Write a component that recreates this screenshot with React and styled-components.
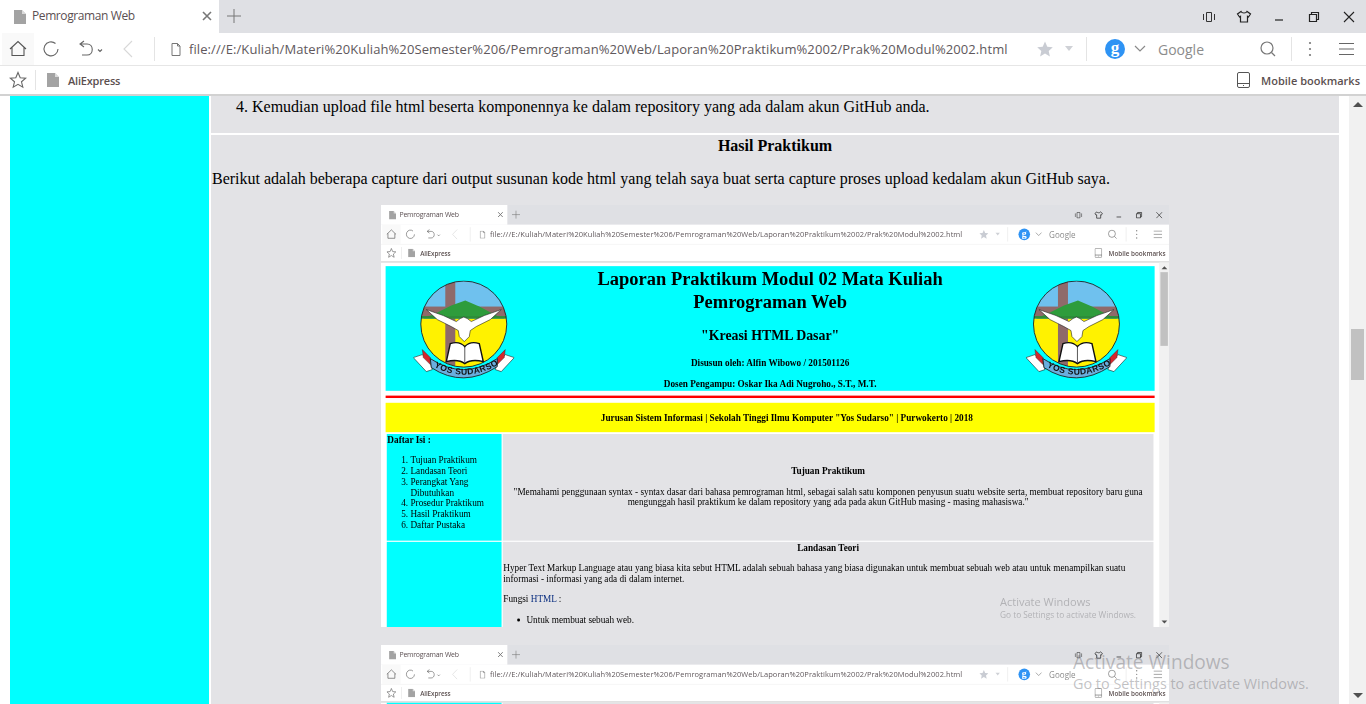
import React from 'react';
import styled, { createGlobalStyle } from 'styled-components';

const GlobalStyle = createGlobalStyle`
  html, body {
    margin: 0;
    padding: 0;
    width: 1366px;
    height: 704px;
    overflow: hidden;
    background: #fff;
  }
`;

const UI_FONT = `"Open Sans", "Noto Sans", sans-serif`;

/* browser window */
const Screen = styled.div`
  position: relative;
  width: 1366px;
  height: 704px;
  display: flex;
  flex-direction: column;
  background: #fff;
  overflow: hidden;
  font-family: "Liberation Serif", serif;
  font-size: 16px;
  line-height: 18px;
  color: #000;
`;

const TabStrip = styled.div`
  height: 33px;
  flex: none;
  display: flex;
  align-items: stretch;
  background: #dfe0e4;
`;

const Tab = styled.div`
  width: 219px;
  padding-left: 14px;
  box-sizing: border-box;
  display: flex;
  align-items: center;
  background: #fff;
`;

const TabTitle = styled.span`
  margin: 0 0 2px 6px;
  flex: 1;
  font: 12px ${UI_FONT};
  letter-spacing: -0.4px;
  color: #5b4f52;
`;

const Slot = styled.div`
  width: ${({ $w }) => $w}px;
  flex: none;
  display: flex;
  align-items: center;
  justify-content: center;
  margin-left: ${({ $ml }) => $ml || 0}px;
  padding-bottom: ${({ $pb }) => $pb || 0}px;
  background: ${({ $bg }) => $bg || 'transparent'};
`;

const WindowControls = styled.div`
  margin-left: auto;
  display: flex;
`;

const AddressBar = styled.div`
  height: 32px;
  flex: none;
  display: flex;
  align-items: stretch;
  padding: 0 6px 0 2px;
  background: #fff;
  border-bottom: 1px solid #e6e6e6;
`;

const VSep = styled.div`
  width: 1px;
  flex: none;
  margin: 4px 0 4px ${({ $ml }) => $ml || 0}px;
  background: #e4e4e4;
`;

const UrlText = styled.div`
  width: 844px;
  flex: none;
  align-self: center;
  margin-left: 3px;
  white-space: nowrap;
  overflow: hidden;
  font: 13px ${UI_FONT};
  letter-spacing: 0.09px;
  color: #60585c;
`;

const SearchText = styled.div`
  flex: 1;
  align-self: center;
  margin-left: 7px;
  font: 14px ${UI_FONT};
  color: #8c8c8c;
`;

const GBadge = styled.div`
  width: 20px;
  height: 20px;
  border-radius: 50%;
  background: #2e93f4;
  color: #fff;
  font: bold 17px/17px "Liberation Serif", serif;
  text-align: center;
`;

const BookmarkBar = styled.div`
  height: 28px;
  flex: none;
  display: flex;
  align-items: stretch;
  padding: 0 6px 0 2px;
  background: #fff;
  border-bottom: 2px solid #d2d2d2;
`;

const BookmarkText = styled.span`
  align-self: center;
  white-space: nowrap;
  font: 600 11px ${UI_FONT};
  letter-spacing: -0.2px;
  color: #5b4f4f;
  margin-left: 9px;
`;

const MobileLabel = styled(BookmarkText)`
  letter-spacing: 0;
  margin-left: 8px;
`;

const BookmarkEnd = styled.div`
  margin-left: auto;
  display: flex;
  align-items: stretch;
`;

const PageArea = styled.div`
  flex: 1;
  min-height: 0;
  display: flex;
`;

const PageBody = styled.div`
  flex: 1;
  min-width: 0;
  overflow: hidden;
  padding: ${({ $top }) => $top || 0}px 8px 0;
`;

const Scrollbar = styled.div`
  width: 17px;
  flex: none;
  display: flex;
  flex-direction: column;
  align-items: center;
  background: #f1f1f1;
`;

const ScrollArrow = styled.div`
  width: 0;
  height: 0;
  flex: none;
  margin: ${({ $down }) => ($down ? '0 0 6px' : '6px 0 0')};
  border-left: 5px solid transparent;
  border-right: 5px solid transparent;
  ${({ $down }) => ($down ? 'border-top' : 'border-bottom')}: 5px solid #505050;
`;

const ScrollTrack = styled.div`
  flex: 1;
  padding-top: ${({ $top }) => $top}px;
`;

const ScrollThumb = styled.div`
  width: 13px;
  height: ${({ $h }) => $h}px;
  background: #c1c1c1;
`;

const Watermark = styled.div`
  position: absolute;
  left: 1073px;
  top: 651px;
  font-family: ${UI_FONT};
  white-space: nowrap;
  color: rgba(110, 110, 115, 0.42);
  pointer-events: none;
`;

const WatermarkTitle = styled.div`
  font-size: 19.1px;
  line-height: 22px;
`;

const WatermarkHint = styled.div`
  font-size: 14.4px;
  line-height: 22px;
`;

/* page document */
const Table = styled.div`
  display: grid;
  grid-template-columns: 199px 1fr;
  gap: 2px;
  padding: 0 2px;
`;

const Side = styled.div`
  background: #00ffff;
  padding: 1px;
  grid-row: span ${({ $span }) => $span || 1};
`;

const Main = styled.div`
  background: #e3e3e6;
  padding: ${({ $pt }) => $pt || 1}px 1px 1px;
  min-height: ${({ $h }) => $h || 0}px;
  box-sizing: border-box;
  display: ${({ $center }) => ($center ? 'flex' : 'block')};
  flex-direction: column;
  justify-content: center;
`;

const Heading = styled.div`
  font-weight: bold;
  text-align: center;
`;

const Para = styled.p`
  margin: 16px 0;
  text-align: ${({ $center }) => ($center ? 'center' : 'left')};
`;

const ShotIntro = styled(Para)`
  margin: 15px 0 17px;
`;

const List = styled.ol`
  margin: ${({ $flush }) => ($flush ? '1px 0 16px' : '16px 0')};
  padding-left: 40px;
`;

const Bullets = styled.ul`
  margin: 16px 0;
  padding-left: 40px;
`;

const LinkText = styled.span`
  color: #0b2f80;
`;

const ShotFrame = styled.div`
  width: 788px;
  height: 422px;
  margin: ${({ $top }) => $top}px auto 18px;
  overflow: hidden;
  filter: blur(0.3px);
`;

const ShotScale = styled.div`
  width: 1366px;
  height: 704px;
  transform: scale(0.5769, 0.5994);
  transform-origin: 0 0;
`;

/* banner of the page in the capture */
const Banner = styled.div`
  height: 208px;
  display: flex;
  justify-content: space-between;
  padding: 0 48px;
  background: #00ffff;
`;

const LogoSvg = styled.svg`
  width: 175px;
  height: 167px;
  flex: none;
  margin-top: 24px;
`;

const BannerText = styled.div`
  flex: 1;
  text-align: center;
`;

const Title = styled.h1`
  width: 640px;
  margin: 2px auto 0;
  font-size: 32px;
  line-height: 38px;
`;

const SubTitle = styled.h2`
  margin: 24px 0 0;
  font-size: 24px;
  line-height: 27px;
`;

const Credit = styled.div`
  margin-top: ${({ $top }) => $top}px;
  font-weight: bold;
`;

const RedRule = styled.div`
  height: 4px;
  margin: 8px 0;
  background: #ff0000;
`;

const YellowBar = styled.div`
  height: 49px;
  display: flex;
  align-items: center;
  justify-content: center;
  padding-left: 58px;
  margin-bottom: 3px;
  background: #ffff00;
  font-weight: bold;
`;

const Icon = ({ w = 20, h = 20, fill = 'none', stroke = '#555', sw = 1.2, children }) => (
  <svg width={w} height={h} viewBox={`0 0 ${w} ${h}`} fill={fill} stroke={stroke} strokeWidth={sw}>
    {children}
  </svg>
);

const PageGlyph = ({ color = '#a3a3a3' }) => (
  <svg width="12" height="14" viewBox="0 0 12 14">
    <path d="M0 0H8L12 4V14H0Z" fill={color} />
    <path d="M8 0V4H12" fill="#fff" fillOpacity="0.6" />
  </svg>
);

const StarOutline = () => (
  <Icon w={18} h={18} stroke="#666" sw={1.1}>
    <path d="M9 1.5L11.2 6.7L16.7 7.2L12.5 10.8L13.8 16.2L9 13.3L4.2 16.2L5.5 10.8L1.3 7.2L6.8 6.7Z" />
  </Icon>
);

const BrowserChrome = () => (
  <>
    <TabStrip>
      <Tab>
        <PageGlyph />
        <TabTitle>Pemrograman Web</TabTitle>
        <Slot $w={24} $pb={2}>
          <Icon w={10} h={10} stroke="#777" sw={1.6}>
            <path d="M1 1L9 9M9 1L1 9" />
          </Icon>
        </Slot>
      </Tab>
      <Slot $w={30} $pb={2}>
        <Icon w={14} h={14} stroke="#777" sw={1}>
          <path d="M7 0V14M0 7H14" />
        </Icon>
      </Slot>
      <WindowControls>
        <Slot $w={35}>
          <Icon w={14} h={12} stroke="#333" sw={1}>
            <path d="M4.5 1.5H9.5V10.5H4.5ZM1.5 3V9M12.5 3V9" />
          </Icon>
        </Slot>
        <Slot $w={35}>
          <Icon w={16} h={14} stroke="#222" sw={1.2}>
            <path d="M5 1.5L1.5 4L3.5 7L4.5 6.3V12H11.5V6.3L12.5 7L14.5 4L11 1.5C10 3.5 6 3.5 5 1.5Z" />
          </Icon>
        </Slot>
        <Slot $w={35}>
          <Icon w={10} h={12} stroke="#222" sw={1.2}>
            <path d="M1 9H9" />
          </Icon>
        </Slot>
        <Slot $w={35}>
          <Icon w={12} h={12} stroke="#222" sw={1.2}>
            <path d="M1.5 3.5H8.5V10.5H1.5ZM3.5 3.5V1.5H10.5V8.5H8.5" />
          </Icon>
        </Slot>
        <Slot $w={35}>
          <Icon w={12} h={12} stroke="#222" sw={1.1}>
            <path d="M1 1L11 11M11 1L1 11" />
          </Icon>
        </Slot>
      </WindowControls>
    </TabStrip>

    <AddressBar>
      <Slot $w={32} $bg="#f9f9f9">
        <Icon w={18} h={18} stroke="#555" sw={1.1}>
          <path d="M1 9L9 1.5L17 9M3 7.5V15.5H15V7.5" />
        </Icon>
      </Slot>
      <Slot $w={34}>
        <Icon w={18} h={18} stroke="#666" sw={1.1}>
          <path d="M13.5 3.5A7 7 0 1 0 16 9" />
        </Icon>
      </Slot>
      <Slot $w={44} $ml={2}>
        <Icon w={28} h={18} stroke="#666" sw={1.1}>
          <path d="M6 1L2 4L6 7M2 4H9C16 4 16 15 9 15H4" />
          <path d="M20 9.5L22 11.5L24 9.5" />
        </Icon>
      </Slot>
      <Slot $w={26} $ml={1}>
        <Icon w={12} h={18} stroke="#d8d8d8" sw={1.1}>
          <path d="M10 1L2 9L10 17" />
        </Icon>
      </Slot>
      <VSep $ml={13} />
      <Slot $w={20} $ml={11}>
        <Icon w={10} h={13} stroke="#777" sw={1}>
          <path d="M1 .5H6.5L9 3V12.5H1ZM6.5 .5V3H9" />
        </Icon>
      </Slot>
      <UrlText>file:///E:/Kuliah/Materi%20Kuliah%20Semester%206/Pemrograman%20Web/Laporan%20Praktikum%2002/Prak%20Modul%2002.html</UrlText>
      <Slot $w={24}>
        <Icon w={16} h={16} fill="#c9ccd3" stroke="none">
          <path d="M8 .5L10.3 5.7L15.8 6.2L11.7 9.9L12.9 15.4L8 12.5L3.1 15.4L4.3 9.9L.2 6.2L5.7 5.7Z" />
        </Icon>
      </Slot>
      <Slot $w={24}>
        <Icon w={10} h={6} fill="#cfd1d6" stroke="none">
          <path d="M1 0H9L5 5Z" />
        </Icon>
      </Slot>
      <VSep $ml={5} />
      <Slot $w={28} $ml={14}>
        <GBadge>g</GBadge>
      </Slot>
      <Slot $w={22}>
        <Icon w={12} h={8} stroke="#8a8a8a" sw={1.2}>
          <path d="M1 1L6 6L11 1" />
        </Icon>
      </Slot>
      <SearchText>Google</SearchText>
      <Slot $w={24}>
        <Icon w={16} h={16} stroke="#777" sw={1.2}>
          <circle cx="7" cy="7" r="6" />
          <path d="M11.5 11.5L15 15" />
        </Icon>
      </Slot>
      <VSep $ml={11} />
      <Slot $w={24} $ml={6}>
        <Icon w={4} h={16} fill="#777" stroke="none">
          <circle cx="2" cy="2" r="1.1" />
          <circle cx="2" cy="8" r="1.1" />
          <circle cx="2" cy="14" r="1.1" />
        </Icon>
      </Slot>
      <Slot $w={28} $ml={10}>
        <Icon w={15} h={14} stroke="#666" sw={1}>
          <path d="M0 1.5H15M0 7H15M0 12.5H15" />
        </Icon>
      </Slot>
    </AddressBar>

    <BookmarkBar>
      <Slot $w={32}>
        <StarOutline />
      </Slot>
      <VSep $ml={1} />
      <Slot $w={12} $ml={11}>
        <PageGlyph />
      </Slot>
      <BookmarkText>AliExpress</BookmarkText>
      <BookmarkEnd>
        <Slot $w={20}>
          <Icon w={13} h={16} stroke="#555" sw={1}>
            <rect x=".5" y=".5" width="12" height="15" rx="1.5" />
            <path d="M.5 11.5H12.5M6 13.5H7" />
          </Icon>
        </Slot>
        <MobileLabel>Mobile bookmarks</MobileLabel>
      </BookmarkEnd>
    </BookmarkBar>
  </>
);

const Window = ({ pageTop, thumbTop, thumbHeight, children }) => (
  <Screen>
    <BrowserChrome />
    <PageArea>
      <PageBody $top={pageTop}>{children}</PageBody>
      <Scrollbar>
        <ScrollArrow />
        <ScrollTrack $top={thumbTop}>
          <ScrollThumb $h={thumbHeight} />
        </ScrollTrack>
        <ScrollArrow $down />
      </Scrollbar>
    </PageArea>
    <Watermark>
      <WatermarkTitle>Activate Windows</WatermarkTitle>
      <WatermarkHint>Go to Settings to activate Windows.</WatermarkHint>
    </Watermark>
  </Screen>
);

const Logo = ({ id }) => (
  <LogoSvg viewBox="0 0 101 100" preserveAspectRatio="none">
    <defs>
      <clipPath id={`${id}-disc`}>
        <circle cx="50.5" cy="43.5" r="43" />
      </clipPath>
      <path id={`${id}-arc`} d="M17 84Q50 104 85 84" />
    </defs>
    <g clipPath={`url(#${id}-disc)`}>
      <rect x="0" y="0" width="101" height="40" fill="#6fc1ee" />
      <rect x="0" y="38" width="101" height="50" fill="#fff200" />
      <rect x="32" y="0" width="10" height="88" fill="#8f6a6a" />
      <rect x="0" y="26" width="101" height="10" fill="#8f6a6a" />
      <path d="M10 38L22 33L38 25L52 20L66 26L85 36L92 38Z" fill="#2e9c3c" />
      <rect x="0" y="35.5" width="101" height="2.5" fill="#2e8c3a" />
    </g>
    <circle cx="50.5" cy="43.5" r="43" fill="none" stroke="#222" strokeWidth="0.9" />
    <path
      d="M13 29L30 35L43 41L47 38L50.5 36.5L54 38L58 41L71 35L88 29L77 39L63 46L57 50L56 56L51 61L46 56L45 50L38 46L24 39Z"
      fill="#fff"
      stroke="#222"
      strokeWidth="0.6"
    />
    <path d="M37 63Q46 60 51.5 66Q57 60 66 63L70 81Q58 78 51.5 83Q45 78 33 81Z" fill="#fff" stroke="#111" strokeWidth="1.4" />
    <path d="M51.5 66V82" stroke="#111" strokeWidth="0.7" />
    <path d="M0 77L9 74L17 82L19 89L13 91Z" fill="#fff" stroke="#222" strokeWidth="0.6" />
    <path d="M9 69L17 77L17 84L10 77Z" fill="#d7262c" stroke="#222" strokeWidth="0.4" />
    <path d="M101 77L92 74L84 82L82 89L88 91Z" fill="#fff" stroke="#222" strokeWidth="0.6" />
    <path d="M92 69L84 77L84 84L91 77Z" fill="#d7262c" stroke="#222" strokeWidth="0.4" />
    <path d="M17 78Q50 100 84 78L84 86Q50 108 18 87Z" fill="#6aaede" stroke="#222" strokeWidth="0.9" />
    <text fontFamily="Liberation Sans, sans-serif" fontWeight="bold" fontSize="8.6" fill="#111" letterSpacing="0.4">
      <textPath href={`#${id}-arc`} startOffset="6%">YOS SUDARSO</textPath>
    </text>
  </LogoSvg>
);

const CapturedFirst = () => (
  <Window pageTop={6} thumbTop={5} thumbHeight={123}>
    <Banner>
      <Logo id="logo-left" />
      <BannerText>
        <Title>Laporan Praktikum Modul 02 Mata Kuliah Pemrograman Web</Title>
        <SubTitle>"Kreasi HTML Dasar"</SubTitle>
        <Credit $top={23}>Disusun oleh: Alfin Wibowo / 201501126</Credit>
        <Credit $top={17}>Dosen Pengampu: Oskar Ika Adi Nugroho., S.T., M.T.</Credit>
      </BannerText>
      <Logo id="logo-right" />
    </Banner>
    <RedRule />
    <YellowBar>Jurusan Sistem Informasi | Sekolah Tinggi Ilmu Komputer "Yos Sudarso" | Purwokerto | 2018</YellowBar>
    <Table>
      <Side>
        <strong>Daftar Isi :</strong>
        <List>
          <li>Tujuan Praktikum</li>
          <li>Landasan Teori</li>
          <li>Perangkat Yang Dibutuhkan</li>
          <li>Prosedur Praktikum</li>
          <li>Hasil Praktikum</li>
          <li>Daftar Pustaka</li>
        </List>
      </Side>
      <Main $h={178} $pt={15} $center>
        <Heading>Tujuan Praktikum</Heading>
        <Para $center>
          "Memahami penggunaan syntax - syntax dasar dari bahasa pemrograman html, sebagai salah satu komponen penyusun
          suatu website serta, membuat repository baru guna mengunggah hasil praktikum ke dalam repository yang ada pada
          akun GitHub masing - masing mahasiswa."
        </Para>
      </Main>
      <Side />
      <Main>
        <Heading>Landasan Teori</Heading>
        <Para>
          Hyper Text Markup Language atau yang biasa kita sebut HTML adalah sebuah bahasa yang biasa digunakan untuk
          membuat sebuah web atau untuk menampilkan suatu informasi - informasi yang ada di dalam internet.
        </Para>
        <Para>
          Fungsi <LinkText>HTML</LinkText> :
        </Para>
        <Bullets>
          <li>Untuk membuat sebuah web.</li>
        </Bullets>
      </Main>
    </Table>
  </Window>
);

const CapturedSecond = () => (
  <Window pageTop={0} thumbTop={5} thumbHeight={123}>
    <Table>
      <Side />
      <Main $h={600} />
    </Table>
  </Window>
);

export default function App() {
  return (
    <>
      <GlobalStyle />
      <Window pageTop={0} thumbTop={222} thumbHeight={51}>
        <Table>
          <Side $span={2} />
          <Main $h={37}>
            <List start={4} $flush>
              <li>Kemudian upload file html beserta komponennya ke dalam repository yang ada dalam akun GitHub anda.</li>
            </List>
          </Main>
          <Main $pt={2}>
            <Heading>Hasil Praktikum</Heading>
            <ShotIntro>
              Berikut adalah beberapa capture dari output susunan kode html yang telah saya buat serta capture proses
              upload kedalam akun GitHub saya.
            </ShotIntro>
            <ShotFrame $top={0}>
              <ShotScale>
                <CapturedFirst />
              </ShotScale>
            </ShotFrame>
            <ShotFrame $top={18}>
              <ShotScale>
                <CapturedSecond />
              </ShotScale>
            </ShotFrame>
          </Main>
        </Table>
      </Window>
    </>
  );
}
